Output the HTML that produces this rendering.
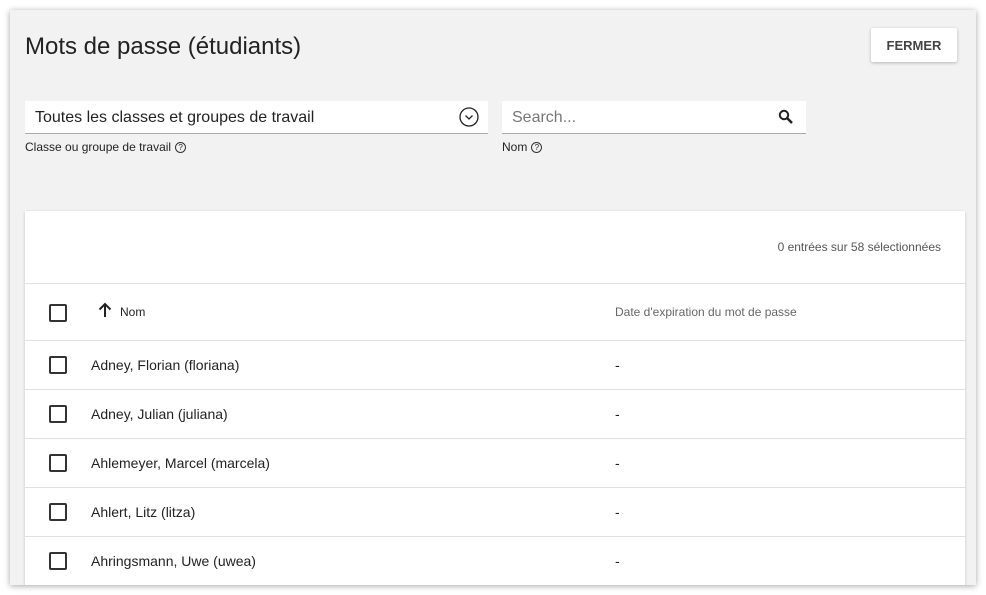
<!DOCTYPE html>
<html><head><meta charset="utf-8"><style>
*{box-sizing:border-box;margin:0;padding:0}
body{width:986px;height:595px;background:#fff;font-family:"Liberation Sans",sans-serif;color:#222;position:relative;overflow:hidden}
.dlg{position:absolute;left:10px;top:10px;width:966px;height:575px;background:#f2f2f2;box-shadow:0 1px 6px rgba(0,0,0,.35);overflow:hidden}
.ab{position:absolute}
h1{position:absolute;left:15px;top:23px;font-size:24px;font-weight:normal;color:#222}
.btn{left:861px;top:18px;width:86px;height:34px;background:#fff;box-shadow:0 1px 3px rgba(0,0,0,.25);border-radius:2px;font-size:13px;color:#444;font-weight:bold;text-align:center;line-height:36px}
.inp{background:#fff;border-bottom:1px solid #aaa;height:33px;font-size:16px;line-height:34px;padding-left:10px}
.lbl{font-size:12px;color:#222}
.q{display:inline-block;width:11px;height:11px;border:1px solid #333;border-radius:50%;font-size:8px;line-height:9px;text-align:center;margin-left:4px;vertical-align:1px}
.card{left:15px;top:201px;width:940px;height:400px;background:#fff;box-shadow:0 1px 3px rgba(0,0,0,.2)}
.row{position:absolute;left:0;width:940px;border-top:1px solid #e0e0e0;height:49px}
.cb{position:absolute;left:24px;width:18px;height:18px;border:2px solid #333;border-radius:2px}
.nm{position:absolute;left:66px;font-size:14px}
.dt{position:absolute;left:590px;font-size:14px}
</style></head><body>
<div class="dlg">
<h1>Mots de passe (étudiants)</h1>
<div class="ab btn">FERMER</div>
<div class="ab inp" style="left:15px;top:91px;width:463px">Toutes les classes et groupes de travail
<svg style="position:absolute;right:9px;top:6px" width="20" height="20" viewBox="0 0 20 20"><circle cx="10" cy="10" r="9" fill="none" stroke="#222" stroke-width="1.3"/><path d="M6.5 8.5 L10 12 L13.5 8.5" fill="none" stroke="#222" stroke-width="1.3"/></svg></div>
<div class="ab lbl" style="left:15px;top:130px">Classe ou groupe de travail<span class="q">?</span></div>
<div class="ab inp" style="left:492px;top:91px;width:304px;color:#777">Search...
<svg style="position:absolute;right:12px;top:8px" width="16" height="16" viewBox="0 0 16 16"><circle cx="6" cy="6" r="4.2" fill="none" stroke="#222" stroke-width="2"/><path d="M9 9 L14 14" stroke="#222" stroke-width="2.6"/></svg></div>
<div class="ab lbl" style="left:492px;top:130px">Nom<span class="q">?</span></div>
<div class="ab card">
<div class="ab" style="right:24px;top:29px;font-size:12px;color:#555">0 entrées sur 58 sélectionnées</div>
<div class="row" style="top:72px;height:57px">
<div class="cb" style="top:20px"></div>
<svg style="position:absolute;left:73px;top:18px" width="14" height="16" viewBox="0 0 14 16"><path d="M7 2 V15 M1.5 7.5 L7 2 L12.5 7.5" fill="none" stroke="#222" stroke-width="2"/></svg>
<div class="ab" style="left:95px;top:21px;font-size:12px">Nom</div>
<div class="ab" style="left:590px;top:21px;font-size:12px;color:#666">Date d'expiration du mot de passe</div></div>
<div class="row" style="top:129px"><div class="cb" style="top:15px"></div><div class="nm" style="top:16px">Adney, Florian (floriana)</div><div class="dt" style="top:16px">-</div></div>
<div class="row" style="top:178px"><div class="cb" style="top:15px"></div><div class="nm" style="top:16px">Adney, Julian (juliana)</div><div class="dt" style="top:16px">-</div></div>
<div class="row" style="top:227px"><div class="cb" style="top:15px"></div><div class="nm" style="top:16px">Ahlemeyer, Marcel (marcela)</div><div class="dt" style="top:16px">-</div></div>
<div class="row" style="top:276px"><div class="cb" style="top:15px"></div><div class="nm" style="top:16px">Ahlert, Litz (litza)</div><div class="dt" style="top:16px">-</div></div>
<div class="row" style="top:325px"><div class="cb" style="top:15px"></div><div class="nm" style="top:16px">Ahringsmann, Uwe (uwea)</div><div class="dt" style="top:16px">-</div></div>
</div>
</div>
</body></html>
